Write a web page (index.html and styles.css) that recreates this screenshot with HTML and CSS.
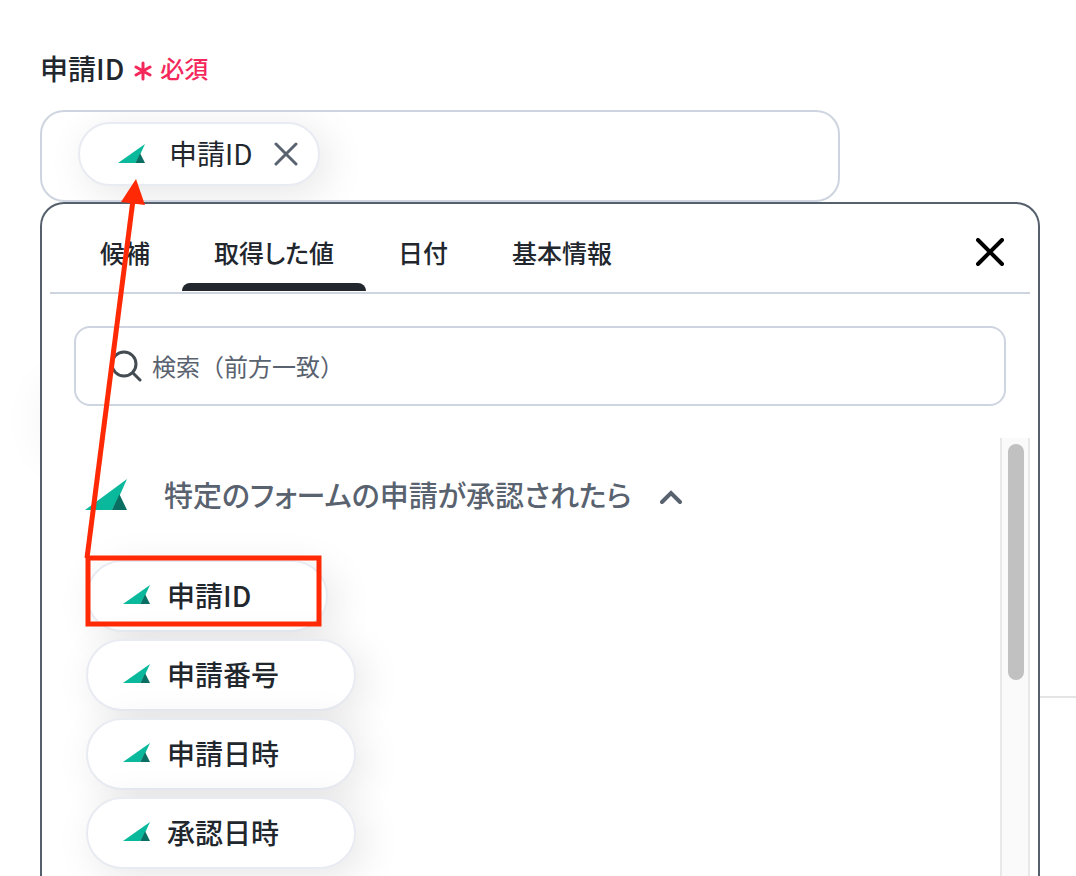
FILE: index.html
```html
<!DOCTYPE html>
<html lang="ja">
<head>
<meta charset="utf-8">
<meta name="viewport" content="width=device-width, initial-scale=1">
<title>申請ID</title>
<link rel="stylesheet" href="styles.css">
</head>
<body>
<svg class="defs" aria-hidden="true">
  <symbol id="sail" viewBox="0 0 78 57" preserveAspectRatio="none">
    <path fill="#0ab99c" d="M0 57 78 0 65 29 50 57Z"/>
    <path fill="#0b6e62" d="M50 57 64 28 78 57Z"/>
  </symbol>
</svg>
<main class="page">
  <div class="backdrop-card"></div>
  <div class="backdrop-line"></div>

  <div class="label-row">
    <span class="label" id="field-label">申請ID</span>
    <span class="required">
      <svg class="asterisk" viewBox="0 0 18 20" aria-hidden="true"><path d="M9 2v16M2 6l14 8M16 6 2 14"/></svg>
      必須
    </span>
  </div>

  <div class="field" role="group" aria-labelledby="field-label">
    <div class="token">
      <svg class="sail" aria-hidden="true"><use href="#sail"/></svg>
      <span>申請ID</span>
      <button class="token-remove" type="button" aria-label="削除">
        <svg viewBox="0 0 24 24" aria-hidden="true"><path d="M2 2l20 20M22 2 2 22"/></svg>
      </button>
    </div>
  </div>

  <section class="popover">
    <div class="tabs" role="tablist">
      <button class="tab" type="button" role="tab">候補</button>
      <button class="tab active" type="button" role="tab" aria-selected="true">取得した値</button>
      <button class="tab" type="button" role="tab">日付</button>
      <button class="tab" type="button" role="tab">基本情報</button>
      <button class="close" type="button" aria-label="閉じる">
        <svg viewBox="0 0 28 28" aria-hidden="true"><path d="M2 2l24 24M26 2 2 26"/></svg>
      </button>
    </div>

    <label class="search">
      <svg class="search-icon" viewBox="0 0 32 32" aria-hidden="true"><circle cx="14" cy="14" r="12"/><path d="M23 23l7 7"/></svg>
      <input type="text" placeholder="検索（前方一致）" aria-label="検索">
    </label>

    <div class="results">
      <div class="list">
        <button class="group" type="button" aria-expanded="true">
          <svg class="sail-large" aria-hidden="true"><use href="#sail"/></svg>
          <span>特定のフォームの申請が承認されたら</span>
          <svg class="chevron" viewBox="0 0 22 14" aria-hidden="true"><path d="M2 12l9-9 9 9"/></svg>
        </button>
        <div class="options">
          <button class="option" type="button"><svg class="sail" aria-hidden="true"><use href="#sail"/></svg>申請ID</button>
          <button class="option" type="button"><svg class="sail" aria-hidden="true"><use href="#sail"/></svg>申請番号</button>
          <button class="option" type="button"><svg class="sail" aria-hidden="true"><use href="#sail"/></svg>申請日時</button>
          <button class="option" type="button"><svg class="sail" aria-hidden="true"><use href="#sail"/></svg>承認日時</button>
        </div>
      </div>
      <div class="scrollbar"><div class="thumb"></div></div>
    </div>
  </section>

  <svg class="annotation" width="340" height="640" aria-hidden="true">
    <path class="arrow-line" d="M87 558 133 200"/>
    <path class="arrow-head" d="M136 179 121 202 145 205Z"/>
    <rect x="88" y="558" width="231" height="66"/>
  </svg>
</main>
</body>
</html>
```

FILE: styles.css
```css
* {
  box-sizing: border-box;
}

body {
  margin: 0;
  background: #fff;
  color: #22272e;
  font-family: "Noto Sans CJK JP", sans-serif;
  font-size: 28px;
  line-height: 40px;
}

button,
input {
  margin: 0;
  padding: 0;
  border: 0;
  background: none;
  color: inherit;
  font: inherit;
}

svg {
  display: block;
  flex: none;
  fill: none;
  stroke-linecap: round;
}

.defs {
  position: absolute;
  width: 0;
  height: 0;
}

.page {
  position: relative;
  display: flex;
  flex-direction: column;
  height: 100vh;
  padding: 48px 36px 0 40px;
  overflow: hidden;
}

.backdrop-card {
  position: absolute;
  top: 396px;
  left: 56px;
  width: 200px;
  height: 48px;
  border-radius: 24px;
  box-shadow: 0 0 56px rgba(0, 0, 0, 0.16);
}

.backdrop-line {
  position: absolute;
  top: 696px;
  right: 0;
  width: 50%;
  height: 2px;
  background: #e4e4e4;
}

.label-row {
  display: flex;
  align-items: center;
  gap: 10px;
  padding-bottom: 22px;
}

.label {
  font-weight: 500;
}

.required {
  display: flex;
  align-items: center;
  gap: 8px;
  color: #f4285a;
  font-size: 24px;
  font-weight: 500;
}

.asterisk {
  width: 18px;
  height: 20px;
  margin-top: 6px;
  stroke: #f4285a;
  stroke-width: 3;
}

.field {
  display: flex;
  flex: none;
  width: 80%;
  max-width: 800px;
  padding: 10px 36px 14px;
  border: 2px solid #cfd5e0;
  border-radius: 24px;
  overflow: hidden;
}

.token {
  display: flex;
  align-items: center;
  height: 64px;
  padding: 0 20px 2px 38px;
  border: 2px solid #e8ebf1;
  border-radius: 32px;
  background: #fff;
  box-shadow: 8px 8px 40px rgba(0, 0, 0, 0.1);
}

.sail {
  width: 27px;
  height: 19px;
}

.token span {
  padding: 0 22px 0 24px;
}

.token-remove svg {
  width: 24px;
  height: 24px;
  margin-top: 2px;
  stroke: #59626f;
  stroke-width: 3;
}

.popover {
  position: relative;
  display: flex;
  flex: 1;
  flex-direction: column;
  min-height: 0;
  padding: 0 8px;
  border: 2px solid #56606c;
  border-bottom: 0;
  border-radius: 24px 24px 0 0;
  background: #fff;
}

.tabs {
  display: flex;
  flex: none;
  height: 90px;
  padding: 0 26px 0 18px;
  border-bottom: 2px solid #cfd5e0;
}

.tab {
  display: flex;
  flex-direction: column;
  justify-content: space-between;
  padding: 28px 32px 0;
  font-feature-settings: "palt";
  font-size: 25px;
  font-weight: 500;
}

.tab::after {
  height: 8px;
  margin: 0 -32px 1px;
  border-radius: 8px 8px 0 0;
  content: "";
  align-self: stretch;
}

.tab.active::after {
  background: #22272e;
}

.close {
  margin-left: auto;
  padding-top: 8px;
}

.close svg {
  width: 28px;
  height: 28px;
  stroke: #000;
  stroke-width: 4;
}

.search {
  display: flex;
  flex: none;
  align-items: center;
  gap: 10px;
  height: 80px;
  margin: 32px 24px;
  padding: 0 34px;
  border: 2px solid #cfd5e0;
  border-radius: 16px;
}

.search-icon {
  width: 32px;
  height: 32px;
  stroke: #434b53;
  stroke-width: 3;
}

.search input {
  flex: 1;
  min-width: 0;
  height: 40px;
  outline: 0;
  font-size: 24px;
}

.search input::placeholder {
  color: #59626f;
  opacity: 1;
}

.results {
  display: flex;
  flex: 1;
  min-height: 0;
}

.list {
  flex: 1;
  min-width: 0;
  padding: 36px 0 0 35px;
  overflow: hidden;
}

.group {
  display: flex;
  align-items: center;
  color: #59626f;
  font-feature-settings: "palt";
  font-size: 29px;
  font-weight: 500;
}

.sail-large {
  width: 42px;
  height: 31px;
}

.group span {
  padding: 0 28px 0 37px;
}

.chevron {
  width: 22px;
  height: 14px;
  margin-top: 6px;
  stroke: #59626f;
  stroke-width: 4;
}

.options {
  display: flex;
  flex-direction: column;
  align-items: flex-start;
  gap: 7px;
  padding: 46px 0 0 1px;
}

.option {
  display: flex;
  align-items: center;
  gap: 17px;
  height: 72px;
  padding: 0 75px 3px 35px;
  border: 2px solid #e8ebf1;
  border-radius: 36px;
  background: #fff;
  box-shadow: 8px 8px 40px rgba(0, 0, 0, 0.1);
  font-weight: 500;
}

.scrollbar {
  flex: none;
  width: 30px;
  padding: 6px;
  border: solid #e8e8e8;
  border-width: 0 2px;
  background: #fafafa;
}

.thumb {
  width: 16px;
  height: 236px;
  border-radius: 8px;
  background: #c1c1c1;
}

.annotation {
  position: absolute;
  top: 0;
  left: 0;
  stroke: #ff2a05;
  stroke-width: 5;
  pointer-events: none;
}

.arrow-line {
  stroke-linecap: butt;
}

.arrow-head {
  fill: #ff2a05;
  stroke: none;
}
```
